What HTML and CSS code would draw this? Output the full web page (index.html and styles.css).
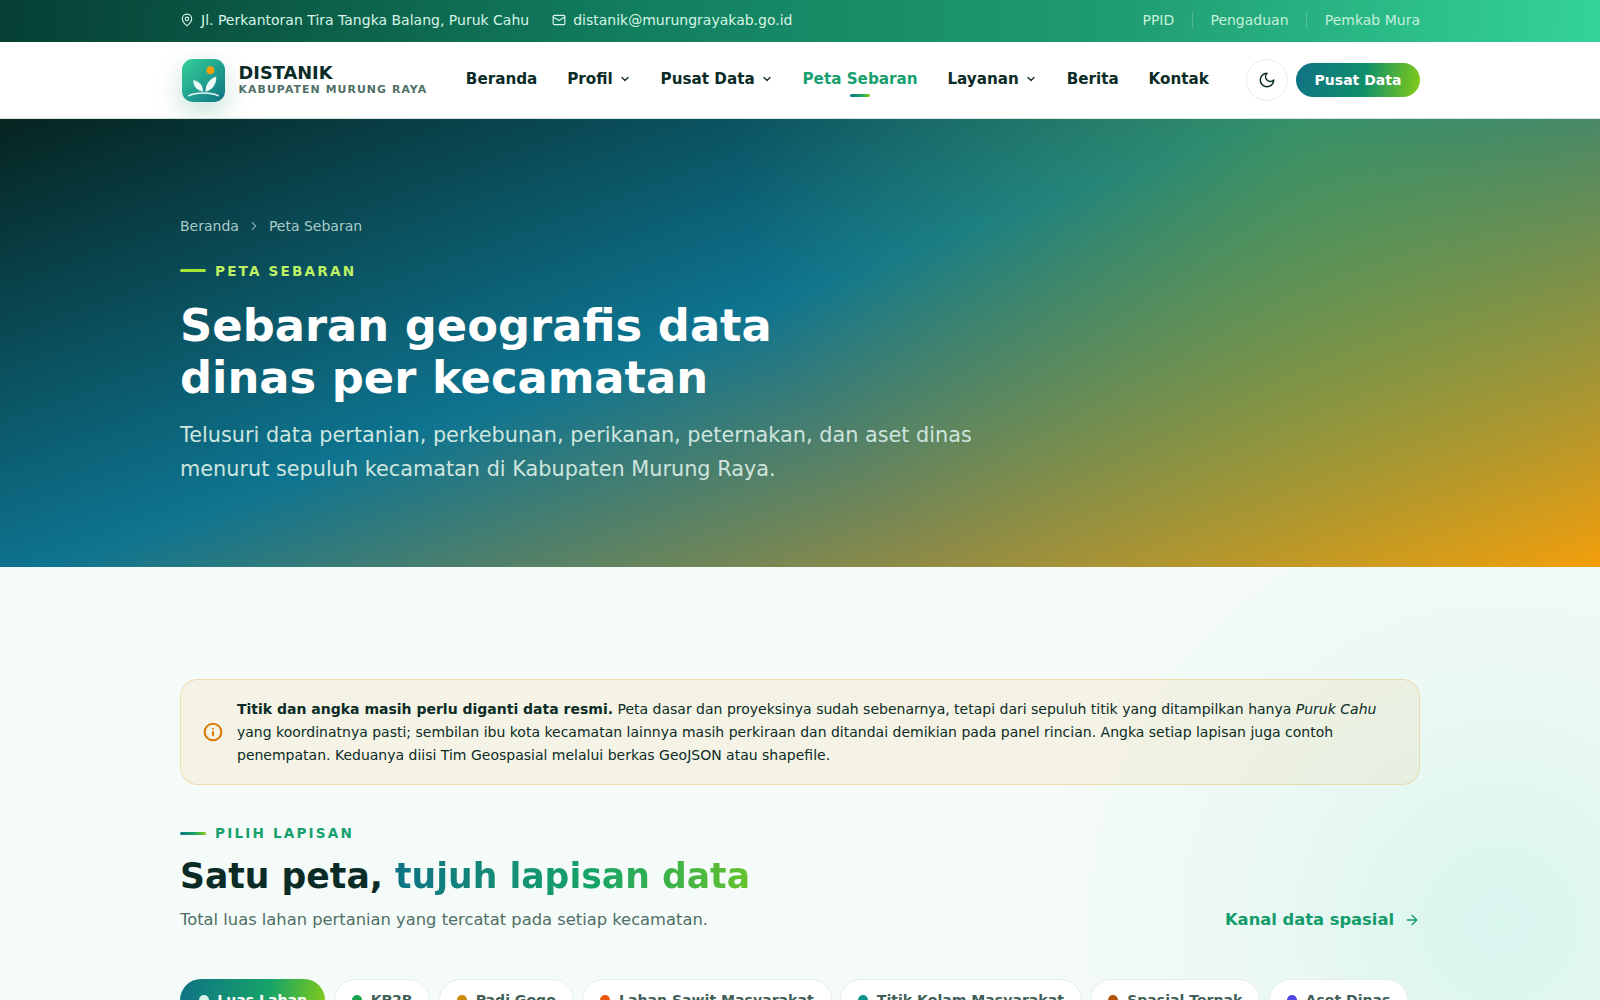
FILE: index.html
```html
<!DOCTYPE html>
<html lang="id">
<head>
<meta charset="utf-8">
<title>Peta Sebaran - DISTANIK</title>
<link rel="stylesheet" href="styles.css">
</head>
<body>
<div class="page">
<div class="topbar">
  <div class="container topbar-in">
    <div class="top-left">
      <span class="top-item">
        <svg class="ic14" viewBox="0 0 24 24" fill="none" stroke="currentColor" stroke-width="2" stroke-linecap="round" stroke-linejoin="round"><path d="M20 10c0 6-8 12-8 12s-8-6-8-12a8 8 0 0 1 16 0Z"/><circle cx="12" cy="10" r="3"/></svg>
        Jl. Perkantoran Tira Tangka Balang, Puruk Cahu</span>
      <span class="top-item">
        <svg class="ic14" viewBox="0 0 24 24" fill="none" stroke="currentColor" stroke-width="2" stroke-linecap="round" stroke-linejoin="round"><rect x="2" y="4" width="20" height="16" rx="2"/><path d="m22 7-10 6L2 7"/></svg>
        distanik@murungrayakab.go.id</span>
    </div>
    <div class="top-right">
      <a>PPID</a><i class="sep"></i><a>Pengaduan</a><i class="sep"></i><a>Pemkab Mura</a>
    </div>
  </div>
</div>
<header class="header">
  <div class="container header-in">
    <div class="brand">
      <span class="logo">
        <svg viewBox="0 0 44 44" width="43" height="43">
          <defs><linearGradient id="lg" x1="0" y1="0" x2="1" y2="1"><stop offset="0" stop-color="#34d399"/><stop offset="1" stop-color="#0f7285"/></linearGradient></defs>
          <rect width="44" height="44" rx="11" fill="url(#lg)"/>
          <circle cx="29" cy="11.500" r="4" fill="#f59e0b"/>
          <path d="M21.500 33.500C15 32 11.500 28 11.500 21.500C18 23 21.500 27 21.500 33.500Z" fill="#fff" fill-opacity=".92"/>
          <path d="M24 33.500C24 26 28 20.500 35 18C35.500 26 31 32 24 33.500Z" fill="#fff" fill-opacity=".92"/>
          <path d="M7 37.500C14 33.800 30 33.800 37 37.500" fill="none" stroke="#fff" stroke-opacity=".9" stroke-width="1.600" stroke-linecap="round"/>
        </svg>
      </span>
      <span class="brand-text"><b>DISTANIK</b><small>KABUPATEN MURUNG RAYA</small></span>
    </div>
    <nav class="nav">
      <a>Beranda</a>
      <a>Profil <svg class="chev" viewBox="0 0 24 24"><path d="m6 9 6 6 6-6"/></svg></a>
      <a>Pusat Data <svg class="chev" viewBox="0 0 24 24"><path d="m6 9 6 6 6-6"/></svg></a>
      <a class="active">Peta Sebaran</a>
      <a>Layanan <svg class="chev" viewBox="0 0 24 24"><path d="m6 9 6 6 6-6"/></svg></a>
      <a>Berita</a>
      <a>Kontak</a>
    </nav>
    <div class="actions">
      <button class="theme"><svg viewBox="0 0 24 24" width="18" height="18" fill="none" stroke="currentColor" stroke-width="2" stroke-linecap="round" stroke-linejoin="round"><path d="M12 3a6 6 0 0 0 9 9 9 9 0 1 1-9-9Z"/></svg></button>
      <a class="cta">Pusat Data</a>
    </div>
  </div>
</header>
<section class="hero">
  <div class="container">
    <div class="crumbs"><span>Beranda</span><svg viewBox="0 0 24 24" class="crumb-ch"><path d="m9 6 6 6-6 6"/></svg><span>Peta Sebaran</span></div>
    <div class="eyebrow light">PETA SEBARAN</div>
    <h1>Sebaran geografis data<br>dinas per kecamatan</h1>
    <p class="lead">Telusuri data pertanian, perkebunan, perikanan, peternakan, dan aset dinas<br>menurut sepuluh kecamatan di Kabupaten Murung Raya.</p>
  </div>
</section>
<main class="main">
  <div class="container">
    <div class="notice">
      <svg class="notice-ic" viewBox="0 0 24 24" fill="none" stroke="currentColor" stroke-width="2.400" stroke-linecap="round"><circle cx="12" cy="12" r="10"/><path d="M12 16v-4"/><path d="M12 8h.01"/></svg>
      <p><strong>Titik dan angka masih perlu diganti data resmi.</strong> Peta dasar dan proyeksinya sudah sebenarnya, tetapi dari sepuluh titik yang ditampilkan hanya <em>Puruk Cahu</em> yang koordinatnya pasti; sembilan ibu kota kecamatan lainnya masih perkiraan dan ditandai demikian pada panel rincian. Angka setiap lapisan juga contoh penempatan. Keduanya diisi Tim Geospasial melalui berkas GeoJSON atau shapefile.</p>
    </div>
    <div class="sec-head">
      <div>
        <div class="eyebrow">PILIH LAPISAN</div>
        <h2>Satu peta, <span class="grad">tujuh lapisan data</span></h2>
        <p class="sub">Total luas lahan pertanian yang tercatat pada setiap kecamatan.</p>
      </div>
      <a class="more">Kanal data spasial <svg viewBox="0 0 24 24" width="16" height="16" fill="none" stroke="currentColor" stroke-width="2" stroke-linecap="round" stroke-linejoin="round"><path d="M5 12h14"/><path d="m12 5 7 7-7 7"/></svg></a>
    </div>
    <div class="pills">
      <span class="pill on"><i class="dot d0"></i>Luas Lahan</span>
      <span class="pill"><i class="dot d1"></i>KP2B</span>
      <span class="pill"><i class="dot d2"></i>Padi Gogo</span>
      <span class="pill"><i class="dot d3"></i>Lahan Sawit Masyarakat</span>
      <span class="pill"><i class="dot d4"></i>Titik Kolam Masyarakat</span>
      <span class="pill"><i class="dot d5"></i>Spasial Ternak</span>
      <span class="pill"><i class="dot d6"></i>Aset Dinas</span>
    </div>
  </div>
</main>
</div>
</body>
</html>
```
FILE: styles.css
```css
* { box-sizing: border-box; }
html, body { margin: 0; padding: 0; }
body { font-family: "DejaVu Sans", sans-serif; color: #0b2b26; }
.page { height: 1000px; overflow: hidden; }
.container { width: 1240px; margin: 0 auto; }
a { color: inherit; text-decoration: none; }

.topbar { height: 42px; background: linear-gradient(92deg, #063f34 0%, #127f5f 40%, #1f9c71 70%, #34d399 100%); color: #d6f5e6; font-size: 14px; }
.topbar-in { height: 40px; display: flex; align-items: center; justify-content: space-between; }
.top-left { display: flex; gap: 23px; }
.top-item { display: flex; align-items: center; gap: 7px; }
.ic14 { width: 14px; height: 14px; }
.top-right { display: flex; align-items: center; gap: 17.600px; color: #c4f0dc; }
.sep { width: 1px; height: 16px; background: rgba(255,255,255,.22); }

.header { height: 77px; background: #fff; border-bottom: 1px solid #d8e6e0; }
.header-in { height: 76px; display: flex; align-items: center; }
.brand { display: flex; align-items: center; gap: 14px; margin: 0 38.500px 0 1.500px; }
.logo { width: 43px; height: 43px; display: block; border-radius: 11px; box-shadow: 0 10px 26px rgba(15,138,99,.25); }
.logo svg { display: block; }
.brand-text { display: flex; flex-direction: column; }
.brand-text b { font-size: 17.800px; line-height: 20px; color: #0b2b26; }
.brand-text small { font-size: 10.880px; line-height: 14px; font-weight: 700; letter-spacing: 1.090px; color: #4f6f67; }
.nav { display: flex; align-items: center; gap: 29.800px; margin-bottom: 2px; font-size: 15.200px; font-weight: 700; color: #0b2b26; }
.nav a { position: relative; display: flex; align-items: center; gap: 4px; }
.chev { width: 12px; height: 12px; fill: none; stroke: currentColor; stroke-width: 2.500; stroke-linecap: round; stroke-linejoin: round; margin-left: 2px; }
.nav .active { color: #17a06f; }
.nav .active::after { content: ""; position: absolute; left: 50%; bottom: -9px; width: 20px; height: 3px; margin-left: -10px; border-radius: 2px; background: linear-gradient(90deg, #0f7285, #16a368 55%, #84cc16); }
.actions { margin-left: auto; display: flex; align-items: center; gap: 8px; }
.theme { width: 42px; height: 42px; border-radius: 50%; border: 1px solid #e6eeeb; background: #fff; color: #0b2b26; display: flex; align-items: center; justify-content: center; padding: 0; }
.cta { height: 34px; width: 124px; border-radius: 17px; display: flex; align-items: center; justify-content: center; color: #fff; font-size: 14px; font-weight: 700; background: linear-gradient(100deg, #0f7285 0%, #0f8f6b 55%, #84cc16 100%); }

.hero { height: 448px; padding-top: 98px; background: radial-gradient(circle 560px at 81% 0%, rgba(132,204,22,.32) 0%, rgba(132,204,22,0) 100%), linear-gradient(160deg, #062420 0%, #0e7490 45%, #f59e0b 100%); color: #fff; }
.crumbs { display: flex; align-items: center; gap: 8px; font-size: 14px; line-height: 18px; color: #a9cac7; }
.crumb-ch { width: 14px; height: 14px; fill: none; stroke: #7fa8a8; stroke-width: 2; stroke-linecap: round; stroke-linejoin: round; }
.eyebrow { display: flex; align-items: center; gap: 9px; font-size: 13.600px; line-height: 18px; font-weight: 700; letter-spacing: 2.180px; color: #17a06f; }
.eyebrow::before { content: ""; width: 26px; height: 3px; border-radius: 2px; background: linear-gradient(90deg, #0f7285, #16a368 55%, #84cc16); }
.eyebrow.light { color: #bef264; margin-top: 26.500px; }
.eyebrow.light::before { background: #a3e635; }
h1 { margin: 20.500px 0 0; font-size: 44.800px; line-height: 52px; font-weight: 700; letter-spacing: 0; }
.lead { margin: 14px 0 0; font-size: 20.800px; line-height: 34px; color: #cfe5df; }

.main { height: 433px; padding-top: 112px; background: radial-gradient(circle 460px at 1500px 357px, #d8f5ee 0%, #e9f8f4 45%, rgba(243,250,248,0) 100%), #f5fbf8; }
.notice { display: flex; align-items: center; gap: 14px; padding: 17.500px 24px 17.500px 22px; border: 1px solid rgba(234,200,110,.5); border-radius: 18px; background: rgba(245,158,11,.08); }
.notice-ic { width: 20px; height: 20px; color: #d97706; flex: none; }
.notice p { margin: 0; font-size: 14px; line-height: 23px; color: #0b2b26; }
.sec-head { display: flex; justify-content: space-between; align-items: flex-end; margin-top: 39px; }
h2 { margin: 12px 0 0; font-size: 34.640px; line-height: 44px; font-weight: 700; }
.grad { background: linear-gradient(90deg, #0f7285, #16a368 55%, #65c22c); -webkit-background-clip: text; background-clip: text; color: transparent; }
.sub { margin: 10px 0 0; font-size: 16.320px; line-height: 24px; color: #4f6f67; }
.more { display: flex; align-items: center; gap: 10px; color: #149c6b; font-size: 16.320px; font-weight: 700; margin-bottom: 3px; }
.pills { display: flex; gap: 8.500px; margin-top: 46.500px; }
.pill { display: flex; align-items: center; gap: 8.700px; height: 42px; padding: 0 17px; border: 1px solid #e6eeeb; border-radius: 21px; background: #fff; font-size: 14.080px; font-weight: 700; color: #3f5f57; white-space: nowrap; }
.pill.on { padding: 0 17.500px; color: #fff; border-color: transparent; background: linear-gradient(100deg, #0f7285, #16a368 60%, #84cc16) border-box; }
.dot { width: 10px; height: 10px; border-radius: 50%; flex: none; }
.d0 { background: #d6f5e6; } .d1 { background: #16a34a; } .d2 { background: #ca8a04; } .d3 { background: #ea580c; } .d4 { background: #0d9488; } .d5 { background: #b45309; } .d6 { background: #4f46e5; }
```
